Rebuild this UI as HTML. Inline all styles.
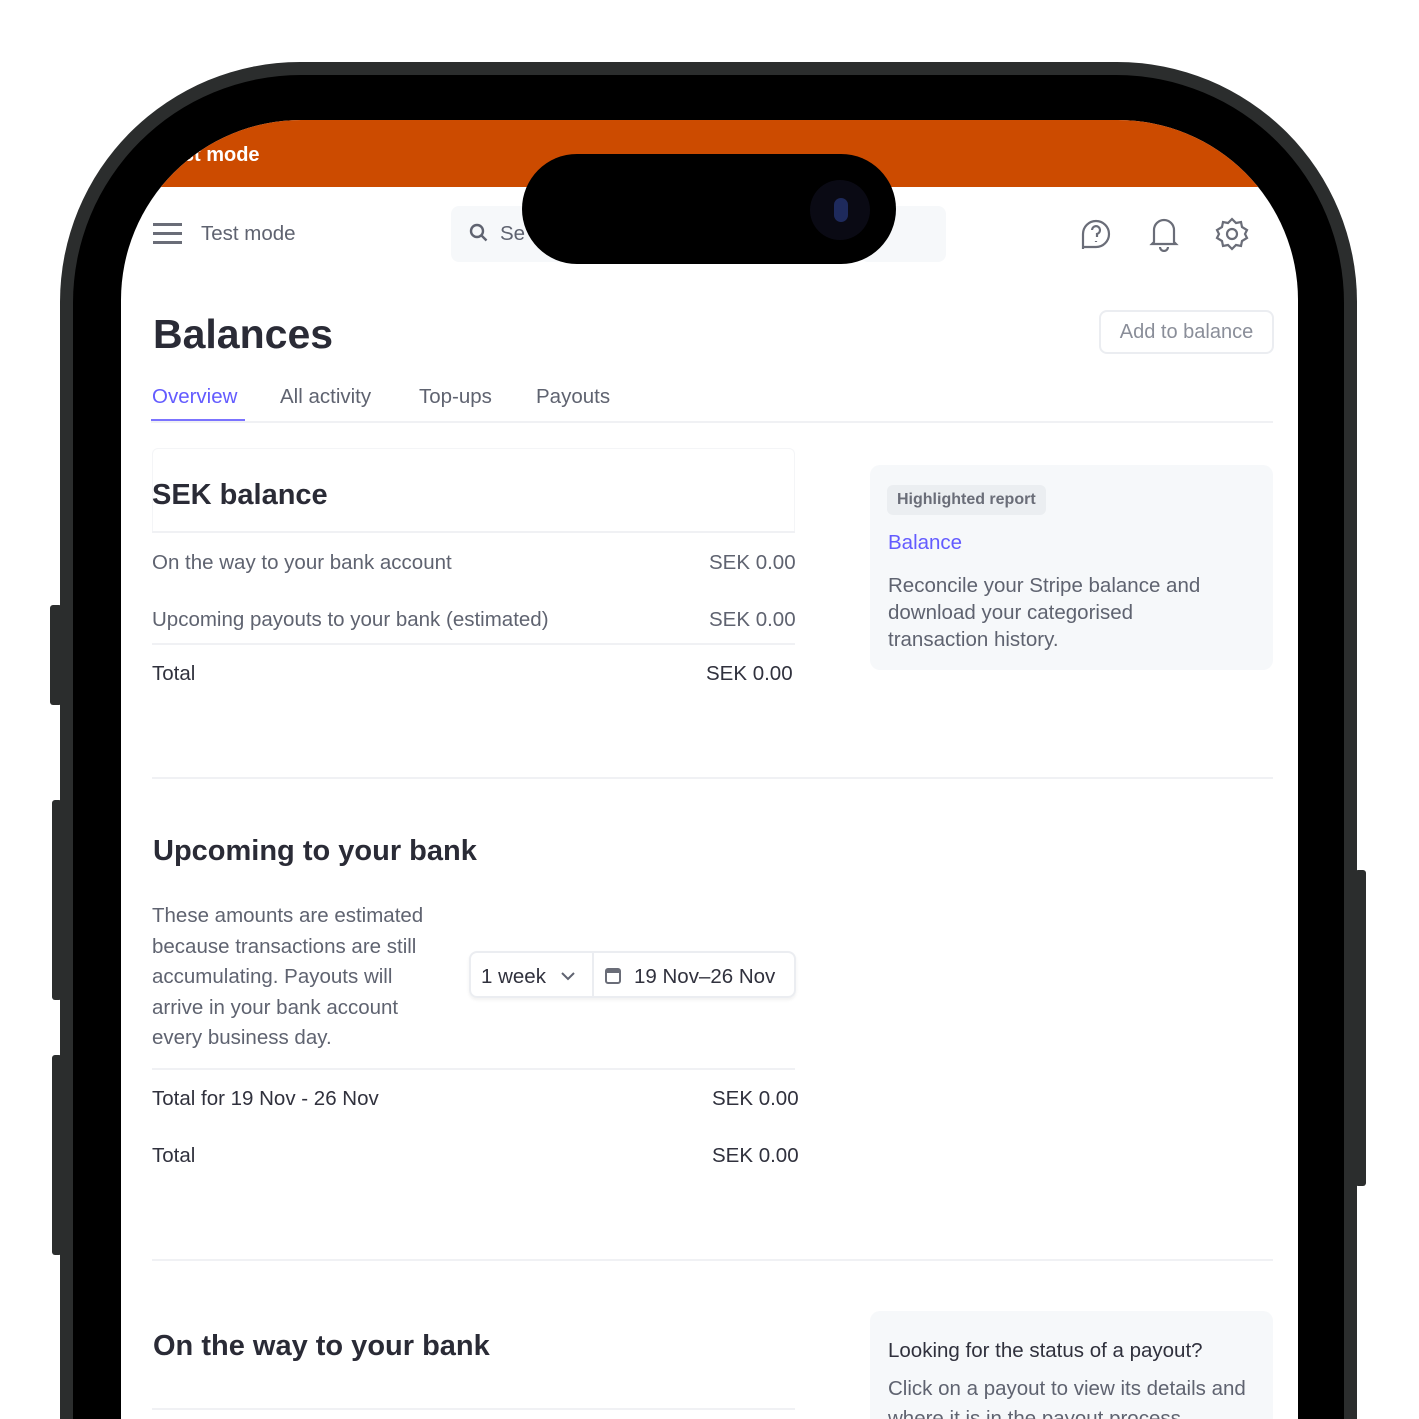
<!DOCTYPE html>
<html><head><meta charset="utf-8"><style>
*{margin:0;padding:0;box-sizing:border-box}
html,body{width:1419px;height:1419px;overflow:hidden;background:#fff}
#w{position:relative;width:1419px;height:1419px;overflow:hidden;font-family:"Liberation Sans",sans-serif;color:#5a5e6b}
.a{position:absolute;white-space:nowrap}
.frame{position:absolute;left:60px;top:62px;width:1297px;height:1357px;border-radius:240px 240px 0 0;background:#2b2d2d}
.bez{position:absolute;left:73px;top:75px;width:1271px;height:1344px;border-radius:228px 228px 0 0;background:#000}
.scr{position:absolute;left:121px;top:120px;width:1177px;height:1299px;border-radius:180px 180px 0 0;background:#fff;overflow:hidden}
.btn{position:absolute;background:#2b2d2d;border-radius:3px}
.s{font-size:20.5px;color:#5f6370}
.d{color:#30313d}
.h{font-weight:bold;color:#2a2b36}
.line{position:absolute;height:2px;background:#f0f1f4}
</style></head><body><div id="w">
<div class="btn" style="left:50px;top:605px;width:12px;height:100px"></div>
<div class="btn" style="left:52px;top:800px;width:10px;height:200px"></div>
<div class="btn" style="left:52px;top:1055px;width:10px;height:200px"></div>
<div class="btn" style="left:1355px;top:870px;width:11px;height:316px"></div>
<div class="frame"></div>
<div class="bez"></div>
<div class="scr">
 <div style="position:absolute;left:0;top:0;width:1177px;height:67px;background:#cc4b00"></div>
 <div class="a" style="left:40px;top:24px;color:#fff;font-weight:bold;font-size:20px">Test mode</div>
</div>

<div style="position:absolute;left:153px;top:223px;width:29px;height:3px;background:#6a6d78;box-shadow:0 9px 0 #6a6d78,0 18px 0 #6a6d78"></div>
<div class="a s" style="left:201px;top:222px">Test mode</div>
<div style="position:absolute;left:451px;top:206px;width:140px;height:56px;border-radius:8px;background:#f6f8fa"></div>
<div style="position:absolute;left:860px;top:206px;width:86px;height:56px;border-radius:8px;background:#f6f8fa"></div>
<svg class="a" style="left:469px;top:223px" width="20" height="20" viewBox="0 0 20 20" fill="none" stroke="#5f6370" stroke-width="2.4"><circle cx="8" cy="8" r="6"/><path d="M12.5 12.5l5 5"/></svg>
<div class="a s" style="left:500px;top:222px">Se</div>
<div style="position:absolute;left:522px;top:154px;width:374px;height:110px;border-radius:55px;background:#000"></div>
<div style="position:absolute;left:810px;top:180px;width:60px;height:60px;border-radius:30px;background:#0a0a14"></div>
<div style="position:absolute;left:834px;top:198px;width:14px;height:24px;border-radius:7px;background:#1e2a5c"></div>
<svg class="a" style="left:1078px;top:216px" width="36" height="36" viewBox="0 0 36 36" fill="none" stroke="#6a6d78" stroke-width="2.2"><path d="M5 33V18a13 13 0 1 1 13 13H5z"/><path d="M14 14a4 4 0 1 1 5 4v3M18 25v1"/></svg>
<svg class="a" style="left:1148px;top:216px" width="32" height="36" viewBox="0 0 32 36" fill="none" stroke="#6a6d78" stroke-width="2.2"><path d="M6 26V14a10 10 0 0 1 20 0v12l2 2H4z"/><path d="M12 31a4 4 0 0 0 8 0"/></svg>
<svg class="a" style="left:1214px;top:216px" width="36" height="36" viewBox="0 0 36 36" fill="none" stroke="#6a6d78" stroke-width="2.2"><path d="M18 3l4 4 5-1 1 5 5 3-2 4 2 4-5 3-1 5-5-1-4 4-4-4-5 1-1-5-5-3 2-4-2-4 5-3 1-5 5 1z"/><circle cx="18" cy="18" r="5"/></svg>

<div class="a h" style="left:153px;top:311px;font-size:41px">Balances</div>
<div class="a" style="left:1099px;top:310px;width:175px;height:44px;border:2px solid #ebedf1;border-radius:8px;font-size:20px;color:#8a8e99;text-align:center;line-height:40px">Add to balance</div>
<div class="a s" style="left:152px;top:385px;color:#635bff">Overview</div>
<div style="position:absolute;left:151px;top:419px;width:94px;height:3px;background:#7b73ff"></div>
<div class="a s" style="left:280px;top:385px">All activity</div>
<div class="a s" style="left:419px;top:385px">Top-ups</div>
<div class="a s" style="left:536px;top:385px">Payouts</div>
<div class="line" style="left:151px;top:421px;width:1122px"></div>

<div style="position:absolute;left:152px;top:448px;width:643px;height:85px;border:1px solid #f4f5f7;border-bottom:none;border-radius:6px 6px 0 0"></div>
<div class="a h" style="left:152px;top:479px;font-size:29px">SEK balance</div>
<div class="line" style="left:152px;top:531px;width:643px"></div>
<div class="a s" style="left:152px;top:551px">On the way to your bank account</div>
<div class="a s" style="left:709px;top:551px">SEK 0.00</div>
<div class="a s" style="left:152px;top:608px">Upcoming payouts to your bank (estimated)</div>
<div class="a s" style="left:709px;top:608px">SEK 0.00</div>
<div class="line" style="left:152px;top:643px;width:643px"></div>
<div class="a s d" style="left:152px;top:662px">Total</div>
<div class="a s d" style="left:706px;top:662px">SEK 0.00</div>

<div style="position:absolute;left:870px;top:465px;width:403px;height:205px;border-radius:10px;background:#f6f8fa"></div>
<div class="a" style="left:887px;top:485px;height:30px;padding:0 10px;border-radius:6px;background:#ebeef1;font-size:16px;font-weight:bold;color:#6a6d78;line-height:30px">Highlighted report</div>
<div class="a s" style="left:888px;top:531px;color:#635bff">Balance</div>
<div class="a s" style="left:888px;top:572px;line-height:27px;white-space:normal;width:340px">Reconcile your Stripe balance and download your categorised transaction history.</div>

<div class="line" style="left:152px;top:777px;width:1121px"></div>

<div class="a h" style="left:153px;top:835px;font-size:29px">Upcoming to your bank</div>
<div class="a s" style="left:152px;top:901px;line-height:30.5px;white-space:normal;width:290px">These amounts are estimated because transactions are still accumulating. Payouts will arrive in your bank account every business day.</div>
<div class="a" style="left:469px;top:951px;width:327px;height:47px;border:2px solid #ebedf1;border-radius:8px;box-shadow:0 2px 3px rgba(0,0,0,.06)"></div>
<div style="position:absolute;left:592px;top:952px;width:2px;height:45px;background:#ebedf1"></div>
<div class="a s d" style="left:481px;top:965px">1 week</div>
<svg class="a" style="left:560px;top:970px" width="16" height="12" viewBox="0 0 16 12" fill="none" stroke="#5f6370" stroke-width="2"><path d="M2 3l6 6 6-6"/></svg>
<div style="position:absolute;left:605px;top:968px;width:16px;height:16px;border:2px solid #6a6d78;border-radius:3px;border-top-width:5px"></div>
<div class="a s d" style="left:634px;top:965px">19 Nov–26 Nov</div>
<div class="line" style="left:152px;top:1068px;width:643px"></div>
<div class="a s d" style="left:152px;top:1087px">Total for 19 Nov - 26 Nov</div>
<div class="a s d" style="left:712px;top:1087px">SEK 0.00</div>
<div class="a s d" style="left:152px;top:1144px">Total</div>
<div class="a s d" style="left:712px;top:1144px">SEK 0.00</div>

<div class="line" style="left:152px;top:1259px;width:1121px"></div>

<div class="a h" style="left:153px;top:1330px;font-size:29px">On the way to your bank</div>
<div class="line" style="left:152px;top:1408px;width:643px"></div>
<div style="position:absolute;left:870px;top:1311px;width:403px;height:108px;border-radius:10px 10px 0 0;background:#f6f8fa"></div>
<div class="a s d" style="left:888px;top:1339px">Looking for the status of a payout?</div>
<div class="a" style="left:888px;top:1374px;width:380px;height:45px;overflow:hidden;white-space:normal;font-size:20.5px;color:#5f6370;line-height:30px">Click on a payout to view its details and where it is in the payout process</div>
</div></body></html>
